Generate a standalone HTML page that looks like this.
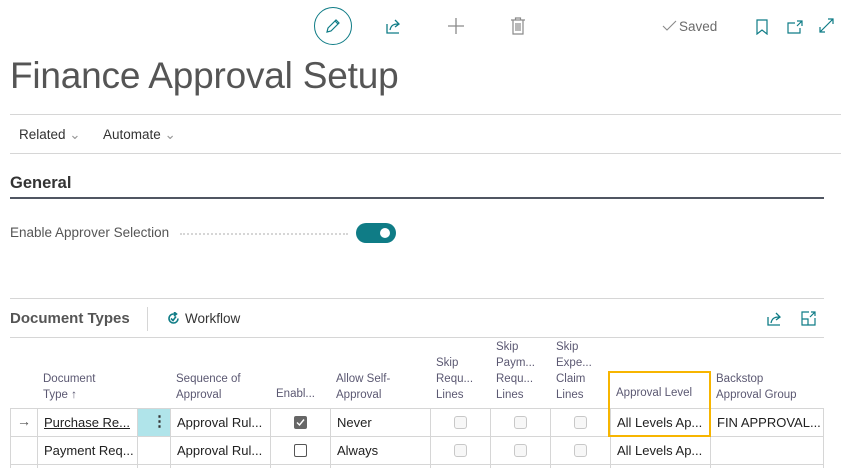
<!DOCTYPE html>
<html><head><meta charset="utf-8"><style>
*{margin:0;padding:0;box-sizing:border-box}
body{width:841px;height:468px;background:#fff;font-family:"Liberation Sans",sans-serif;color:#212121;position:relative;overflow:hidden}
.a{position:absolute;white-space:nowrap}
.hl{position:absolute;height:1px;background:#d6d6d6}
.vl{position:absolute;width:1px;background:#d6d6d6}
.h{position:absolute;font-size:11.5px;color:#5b5872;line-height:16px}
.c{position:absolute;font-size:13px;line-height:16px;color:#212121}
.cb{position:absolute;width:13px;height:13px;border:1px solid #c8c8c8;border-radius:3px;background:#f7f7f7}
</style></head><body>
<div class="a" style="left:314px;top:7px;width:38px;height:38px;border:1.3px solid #0f7c86;border-radius:50%"></div>
<svg class="a" style="left:324px;top:17px" width="18" height="18" viewBox="0 0 18 18"><path d="M3 15l1-4 8-8 3 3-8 8z M11 4l3 3" fill="none" stroke="#0f7c86" stroke-width="1.2"/></svg>
<svg class="a" style="left:385px;top:17px" width="18" height="18" viewBox="0 0 18 18"><path d="M2 7v9h12 M5 13c1-5 4-6 8-6 M10 3l4 4-4 3" fill="none" stroke="#0f7c86" stroke-width="1.3"/></svg>
<svg class="a" style="left:447px;top:17px" width="18" height="18" viewBox="0 0 18 18"><path d="M9 1v16 M1 9h16" stroke="#8a8a8a" stroke-width="1.3"/></svg>
<svg class="a" style="left:510px;top:17px" width="16" height="18" viewBox="0 0 16 18"><path d="M1 3h14 M5.5 3V1h5v2 M3 3v14h10V3 M6 6v8 M8 6v8 M10 6v8" fill="none" stroke="#8a8a8a" stroke-width="1.2"/></svg>
<svg class="a" style="left:662px;top:20px" width="16" height="12" viewBox="0 0 16 12"><path d="M1 6l4 4 9-9" fill="none" stroke="#8a8a8a" stroke-width="1.1"/></svg>
<div class="a" style="left:679px;top:19px;font-size:13.5px;color:#6b6b6b">Saved</div>
<svg class="a" style="left:756px;top:19px" width="12" height="16" viewBox="0 0 12 16"><path d="M1 1h10v14l-5-4-5 4z" fill="none" stroke="#0f7c86" stroke-width="1.2"/></svg>
<svg class="a" style="left:787px;top:20px" width="16" height="14" viewBox="0 0 16 14"><path d="M8 3H1v10h12V8 M10 1h5v5 M15 1l-5 5" fill="none" stroke="#0f7c86" stroke-width="1.2"/></svg>
<svg class="a" style="left:819px;top:18px" width="15" height="15" viewBox="0 0 15 15"><path d="M1 14L14 1 M1 9v5h5 M9 1h5v5" fill="none" stroke="#0f7c86" stroke-width="1.2"/></svg>
<div class="a" style="left:10px;top:55px;font-size:37px;font-weight:300;color:#555;letter-spacing:-0.2px">Finance Approval Setup</div>
<div class="hl" style="left:10px;top:114px;width:831px"></div>
<div class="a" style="left:19px;top:127px;font-size:13.5px;color:#333">Related <span style="color:#999">&#8964;</span></div>
<div class="a" style="left:103px;top:127px;font-size:13.5px;color:#333">Automate <span style="color:#999">&#8964;</span></div>
<div class="hl" style="left:10px;top:153px;width:831px"></div>
<div class="a" style="left:10px;top:174px;font-size:16.5px;font-weight:bold;color:#333">General</div>
<div class="a" style="left:10px;top:197px;width:814px;height:2px;background:#505662"></div>
<div class="a" style="left:10px;top:225px;font-size:13.5px;color:#555">Enable Approver Selection</div>
<div class="a" style="left:180px;top:233px;width:168px;border-top:2px dotted #d6d6d6"></div>
<div class="a" style="left:356px;top:223px;width:40px;height:20px;border-radius:10px;background:#0f7c86"></div>
<div class="a" style="left:380px;top:228px;width:10px;height:10px;border-radius:50%;background:#fff"></div>
<div class="hl" style="left:10px;top:298px;width:814px"></div>
<div class="a" style="left:10px;top:310px;font-size:15px;font-weight:bold;color:#555">Document Types</div>
<div class="vl" style="left:147px;top:307px;height:24px"></div>
<svg class="a" style="left:167px;top:312px" width="13" height="13" viewBox="0 0 13 13"><path d="M11 6.5A4.5 4.5 0 1 1 6.5 2H9 M7 0l2.5 2L7 4 M4 6.5l2 2 3-4" fill="none" stroke="#0f7c86" stroke-width="1.6"/></svg>
<div class="a" style="left:185px;top:311px;font-size:13.5px;color:#333">Workflow</div>
<svg class="a" style="left:767px;top:311px" width="17" height="15" viewBox="0 0 17 15"><path d="M1 6v8h12 M4 12c1-5 4-6 8-6 M9 2l4 4-4 3" fill="none" stroke="#0f7c86" stroke-width="1.3"/></svg>
<svg class="a" style="left:801px;top:311px" width="15" height="15" viewBox="0 0 15 15"><path d="M8 1H1v13h13V7 M1 8h6v6 M10 1h4v4 M14 1l-5 5" fill="none" stroke="#0f7c86" stroke-width="1.2"/></svg>
<div class="hl" style="left:10px;top:337px;width:814px"></div>
<div class="h" style="left:43px;top:371px">Document<br>Type ↑</div>
<div class="h" style="left:176px;top:371px">Sequence of<br>Approval</div>
<div class="h" style="left:276px;top:386px">Enabl...</div>
<div class="h" style="left:336px;top:371px">Allow Self-<br>Approval</div>
<div class="h" style="left:436px;top:355px">Skip<br>Requ...<br>Lines</div>
<div class="h" style="left:496px;top:339px">Skip<br>Paym...<br>Requ...<br>Lines</div>
<div class="h" style="left:556px;top:339px">Skip<br>Expe...<br>Claim<br>Lines</div>
<div class="h" style="left:616px;top:385px">Approval Level</div>
<div class="h" style="left:716px;top:371px">Backstop<br>Approval Group</div>
<div class="hl" style="left:10px;top:408px;width:814px"></div>
<div class="hl" style="left:10px;top:436px;width:814px"></div>
<div class="hl" style="left:10px;top:464px;width:814px"></div>
<div class="vl" style="left:10px;top:408px;height:60px"></div>
<div class="vl" style="left:37px;top:408px;height:60px"></div>
<div class="vl" style="left:137px;top:408px;height:60px"></div>
<div class="vl" style="left:170px;top:408px;height:60px"></div>
<div class="vl" style="left:270px;top:408px;height:60px"></div>
<div class="vl" style="left:330px;top:408px;height:60px"></div>
<div class="vl" style="left:430px;top:408px;height:60px"></div>
<div class="vl" style="left:490px;top:408px;height:60px"></div>
<div class="vl" style="left:550px;top:408px;height:60px"></div>
<div class="vl" style="left:610px;top:408px;height:60px"></div>
<div class="vl" style="left:710px;top:408px;height:60px"></div>
<div class="vl" style="left:823px;top:408px;height:60px"></div>
<div class="a" style="left:138px;top:409px;width:32px;height:27px;background:#b0e4ea"></div>
<div class="a" style="left:152px;top:412px;font-size:15px;color:#333;font-weight:bold">&#8942;</div>
<div class="a" style="left:17px;top:413px;font-size:14px;color:#555">&#8594;</div>
<div class="c" style="left:44px;top:415px;text-decoration:underline">Purchase Re...</div>
<div class="c" style="left:177px;top:415px">Approval Rul...</div>
<div class="a" style="left:294px;top:416px;width:13px;height:13px;border-radius:2px;background:#666"></div>
<svg class="a" style="left:296px;top:418px" width="9" height="9" viewBox="0 0 9 9"><path d="M1 4.5l2.5 2.5L8 1.5" fill="none" stroke="#fff" stroke-width="1.4"/></svg>
<div class="c" style="left:337px;top:415px">Never</div>
<div class="cb" style="left:454px;top:416px"></div>
<div class="cb" style="left:514px;top:416px"></div>
<div class="cb" style="left:574px;top:416px"></div>
<div class="c" style="left:617px;top:415px">All Levels Ap...</div>
<div class="c" style="left:717px;top:415px">FIN APPROVAL...</div>
<div class="c" style="left:44px;top:443px">Payment Req...</div>
<div class="c" style="left:177px;top:443px">Approval Rul...</div>
<div class="a" style="left:294px;top:444px;width:13px;height:13px;border:1px solid #555;border-radius:2px"></div>
<div class="c" style="left:337px;top:443px">Always</div>
<div class="cb" style="left:454px;top:444px"></div>
<div class="cb" style="left:514px;top:444px"></div>
<div class="cb" style="left:574px;top:444px"></div>
<div class="c" style="left:617px;top:443px">All Levels Ap...</div>
<div class="a" style="left:608px;top:371px;width:103px;height:66px;border:2px solid #f7b500"></div>
</body></html>
